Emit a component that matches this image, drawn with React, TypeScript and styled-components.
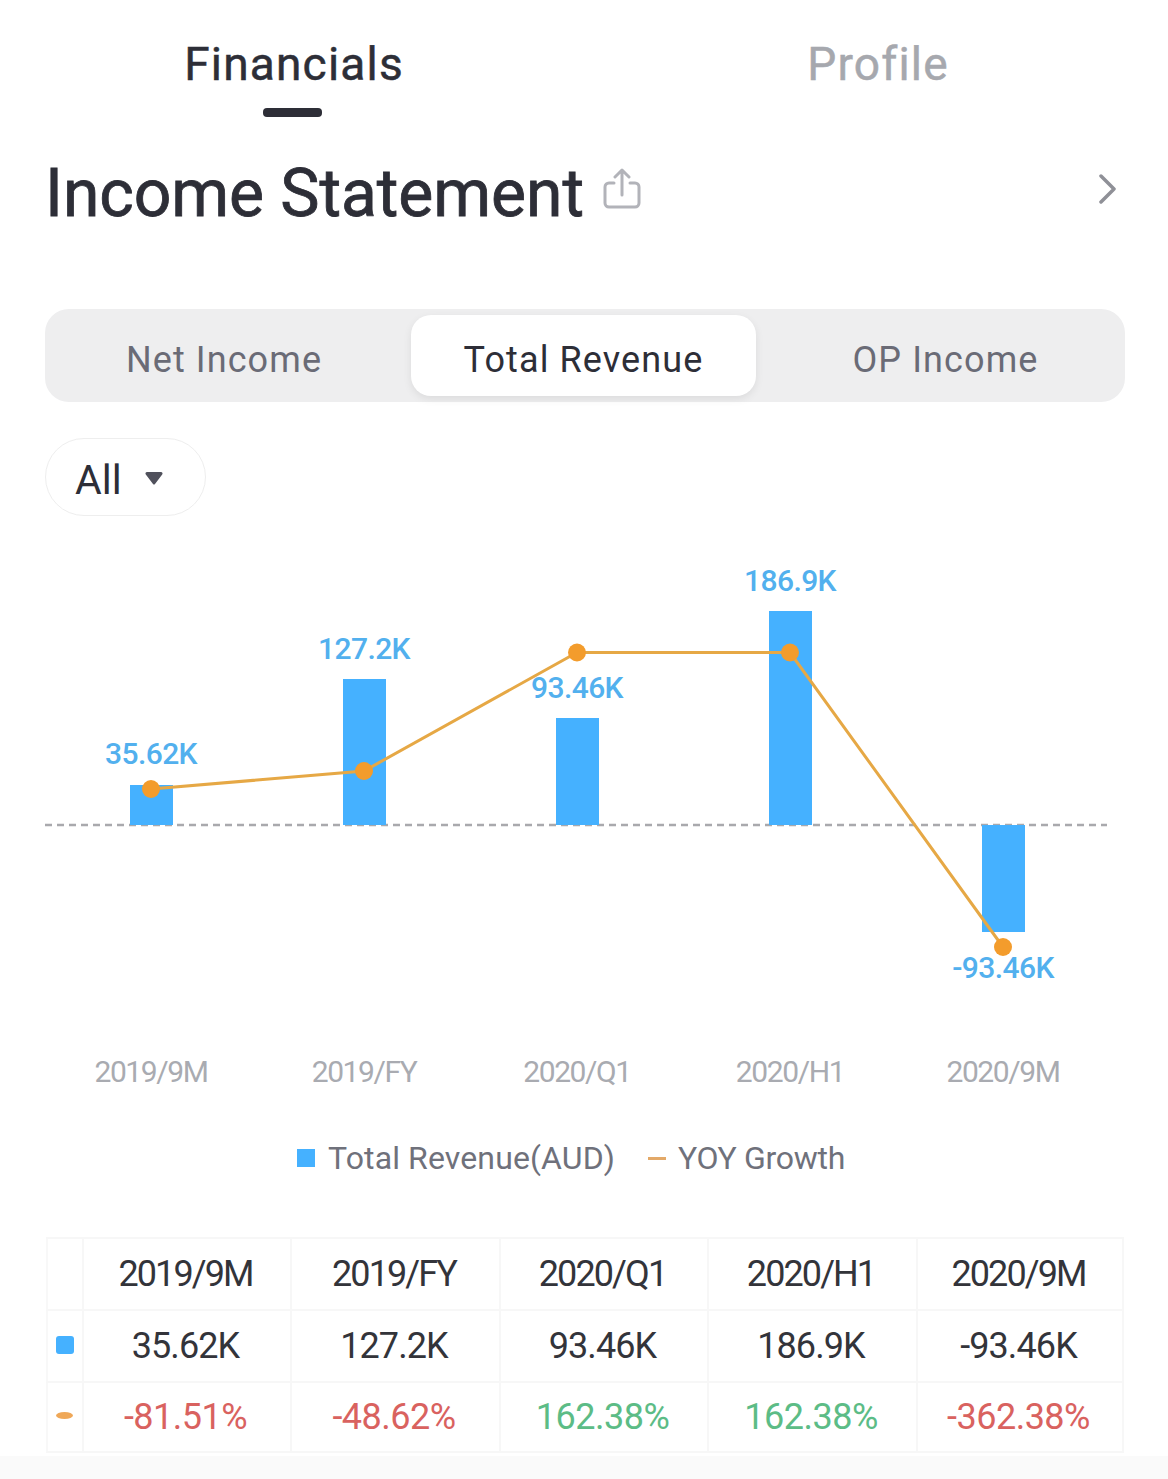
import React from "react";
import styled, { createGlobalStyle } from "styled-components";

const Global = createGlobalStyle`
  html, body { margin: 0; padding: 0; background: #fff; }
  body { font-family: "Roboto", "Liberation Sans", sans-serif; }
`;

const Page = styled.div`
  width: 1168px;
  height: 1479px;
  overflow: hidden;
  background: #fff;
  display: flex;
  flex-direction: column;
`;

const TopTabs = styled.div`
  display: grid;
  grid-template-columns: 584px 584px;
  height: 117px;
  padding-top: 35px;
  box-sizing: border-box;
`;

const TopTab = styled.div<{ $active?: boolean }>`
  position: relative;
  text-align: center;
  font-size: 46px;
  -webkit-text-stroke: 0.5px currentColor;
  line-height: 58px;
  padding-left: 4px;
  letter-spacing: 1.2px;
  color: ${(p) => (p.$active ? "#2d2e37" : "#a6a8ae")};
`;

const TabMark = styled.span`
  position: absolute;
  left: 263px;
  top: 73px;
  width: 59px;
  height: 9px;
  border-radius: 4px;
  background: #2d2e37;
`;

const TitleRow = styled.div`
  display: flex;
  align-items: center;
  height: 144px;
  padding: 0 51px 12px 45px;
  margin-bottom: 36px;
`;

const Title = styled.h1`
  margin: 10px 19px 0 0;
  font-size: 66px;
  line-height: 130px;
  font-weight: 400;
  -webkit-text-stroke: 0.8px currentColor;
  color: #2d2e37;
  letter-spacing: -0.07px;
`;

const Grow = styled.div`
  flex: 1;
`;

const Segments = styled.div`
  margin: 0 43px 0 45px;
  height: 93px;
  box-sizing: border-box;
  padding: 6px 0;
  border-radius: 24px;
  background: #eeeeef;
  display: grid;
  grid-template-columns: 366px 345px 369px;
`;

const Segment = styled.div<{ $active?: boolean }>`
  display: flex;
  align-items: center;
  justify-content: center;
  padding-top: 8px;
  border-radius: 20px;
  font-size: 36px;
  letter-spacing: 1.1px;
  color: ${(p) => (p.$active ? "#2d2e37" : "#6a6b76")};
  background: ${(p) => (p.$active ? "#fff" : "transparent")};
  box-shadow: ${(p) => (p.$active ? "0 3px 8px rgba(0,0,0,0.08)" : "none")};
  &:first-child {
    padding-right: 8px;
  }
  &:last-child {
    padding-left: 10px;
  }
`;

const Pill = styled.div`
  margin: 36px 0 0 45px;
  width: 161px;
  height: 78px;
  box-sizing: border-box;
  border: 1px solid #eeeeee;
  border-radius: 39px;
  display: flex;
  align-items: center;
  padding-left: 29px;
  gap: 23px;
  color: #2d2e37;
`;

const PillLabel = styled.span`
  font-size: 41px;
  padding-top: 6px;
`;

const PillCaret = styled.svg`
  margin-top: 2px;
`;

const Chart = styled.svg`
  display: block;
  width: 1168px;
  height: 584px;
  margin-top: 24px;
  flex: none;
  font-family: "Roboto", "Liberation Sans", sans-serif;
`;

const Legend = styled.div`
  display: flex;
  align-items: center;
  height: 46px;
  margin-top: 11px;
  padding-left: 297px;
  font-size: 32px;
  color: #6f717b;
`;

const LegendSquare = styled.span`
  width: 18px;
  height: 18px;
  background: #45b1ff;
  margin-right: 13px;
`;

const LegendDash = styled.span`
  width: 18px;
  height: 3px;
  background: #e3a968;
  margin: 0 12px 0 33px;
`;

const LegendLabel = styled.span<{ $spacing: number }>`
  letter-spacing: ${(p) => p.$spacing}px;
`;

const Table = styled.div`
  margin: 56px 0 0 46px;
  width: 1078px;
  display: grid;
  grid-template-columns: 38px 208px 209px 208px 209px 206px;
  grid-template-rows: 72px 72px 70px;
  border-top: 2px solid #f7f7f7;
  box-sizing: border-box;
`;

const Cell = styled.div<{ $tone?: "red" | "green"; $spacing?: number }>`
  display: flex;
  align-items: center;
  justify-content: center;
  box-sizing: border-box;
  padding-right: 3px;
  border-right: 2px solid #f7f7f7;
  border-bottom: 2px solid #f7f7f7;
  font-size: 36px;
  letter-spacing: ${(p) => p.$spacing ?? 0}px;
  color: ${(p) => (p.$tone === "red" ? "#d9625f" : p.$tone === "green" ? "#5cbc86" : "#33343a")};
`;

const KeyCell = styled(Cell)`
  padding: 0 1px 3px 0;
  border-left: 2px solid #f8f8f8;
`;

const KeySquare = styled.span`
  width: 18px;
  height: 18px;
  border-radius: 3px;
  background: #45b1ff;
`;

const KeyDash = styled.span`
  width: 17px;
  height: 7px;
  border-radius: 50%;
  background: #efa858;
`;

const Footer = styled.div`
  flex: 1;
  background: #fafafa;
  margin-top: 3px;
`;

const bars = [
  { x: 130, y: 785, h: 40 },
  { x: 343, y: 679, h: 146 },
  { x: 556, y: 718, h: 107 },
  { x: 769, y: 611, h: 214 },
  { x: 982, y: 825, h: 107 },
];
const points = [
  [151, 789],
  [364, 771],
  [577, 652.5],
  [790, 652.5],
  [1003, 947],
];
const values = [
  { t: "35.62K", x: 151, y: 764 },
  { t: "127.2K", x: 364, y: 659 },
  { t: "93.46K", x: 577, y: 698 },
  { t: "186.9K", x: 790, y: 591 },
  { t: "-93.46K", x: 1003, y: 978 },
];
const periods = ["2019/9M", "2019/FY", "2020/Q1", "2020/H1", "2020/9M"];
const amounts = ["35.62K", "127.2K", "93.46K", "186.9K", "-93.46K"];
const growth: { t: string; tone: "red" | "green" }[] = [
  { t: "-81.51%", tone: "red" },
  { t: "-48.62%", tone: "red" },
  { t: "162.38%", tone: "green" },
  { t: "162.38%", tone: "green" },
  { t: "-362.38%", tone: "red" },
];

export default function App() {
  return (
    <Page>
      <Global />
      <TopTabs>
        <TopTab $active>
          Financials
          <TabMark />
        </TopTab>
        <TopTab>Profile</TopTab>
      </TopTabs>
      <TitleRow>
        <Title>Income Statement</Title>
        <svg width="38" height="42" viewBox="0 0 38 42" fill="none" stroke="#b2b3b9" strokeWidth="3" strokeLinecap="round" strokeLinejoin="round">
          <path d="M11 15H6a4 4 0 0 0-4 4v16a4 4 0 0 0 4 4h26a4 4 0 0 0 4-4V19a4 4 0 0 0-4-4h-5" />
          <path d="M19 27V3M12 9l7-7 7 7" />
        </svg>
        <Grow />
        <svg width="18" height="30" viewBox="0 0 18 30" fill="none" stroke="#8f9097" strokeWidth="3.5" strokeLinecap="round" strokeLinejoin="round">
          <path d="M2 2l13 13L2 28" />
        </svg>
      </TitleRow>
      <Segments>
        <Segment>Net Income</Segment>
        <Segment $active>Total Revenue</Segment>
        <Segment>OP Income</Segment>
      </Segments>
      <Pill>
        <PillLabel>All</PillLabel>
        <PillCaret width="18" height="14" viewBox="0 0 18 14">
          <path d="M2 1h14a1.5 1.5 0 0 1 1.2 2.4L10 13a1.3 1.3 0 0 1-2 0L.8 3.4A1.5 1.5 0 0 1 2 1z" fill="#50515c" />
        </PillCaret>
      </Pill>
      <Chart viewBox="0 540 1168 584">
        <line x1="45" y1="825" x2="1107" y2="825" stroke="#a9a9ad" strokeWidth="2.5" strokeDasharray="7 5" />
        {bars.map((b) => (
          <rect key={b.x} x={b.x} y={b.y} width="43" height={b.h} fill="#45b1ff" />
        ))}
        <polyline points={points.map((p) => p.join(",")).join(" ")} fill="none" stroke="#e6a845" strokeWidth="3" />
        {points.map((p) => (
          <circle key={p[0]} cx={p[0]} cy={p[1]} r="9" fill="#f39c2c" />
        ))}
        {values.map((v) => (
          <text key={v.t} x={v.x} y={v.y} textAnchor="middle" fontSize="30" fontWeight="500" letterSpacing="-0.6" fill="#52b0ee">
            {v.t}
          </text>
        ))}
        {periods.map((t, i) => (
          <text key={t} x={151 + i * 213} y="1082" textAnchor="middle" fontSize="30" letterSpacing="-1.4" fill="#a9abb1">
            {t}
          </text>
        ))}
      </Chart>
      <Legend>
        <LegendSquare />
        <LegendLabel $spacing={0.12}>Total Revenue(AUD)</LegendLabel>
        <LegendDash />
        <LegendLabel $spacing={-0.3}>YOY Growth</LegendLabel>
      </Legend>
      <Table>
        <KeyCell />
        {periods.map((t) => (
          <Cell key={t} $spacing={-1.9}>
            {t}
          </Cell>
        ))}
        <KeyCell>
          <KeySquare />
        </KeyCell>
        {amounts.map((t) => (
          <Cell key={t} $spacing={-0.9}>
            {t}
          </Cell>
        ))}
        <KeyCell>
          <KeyDash />
        </KeyCell>
        {growth.map((g, i) => (
          <Cell key={i} $tone={g.tone} $spacing={-0.5}>
            {g.t}
          </Cell>
        ))}
      </Table>
      <Footer />
    </Page>
  );
}
